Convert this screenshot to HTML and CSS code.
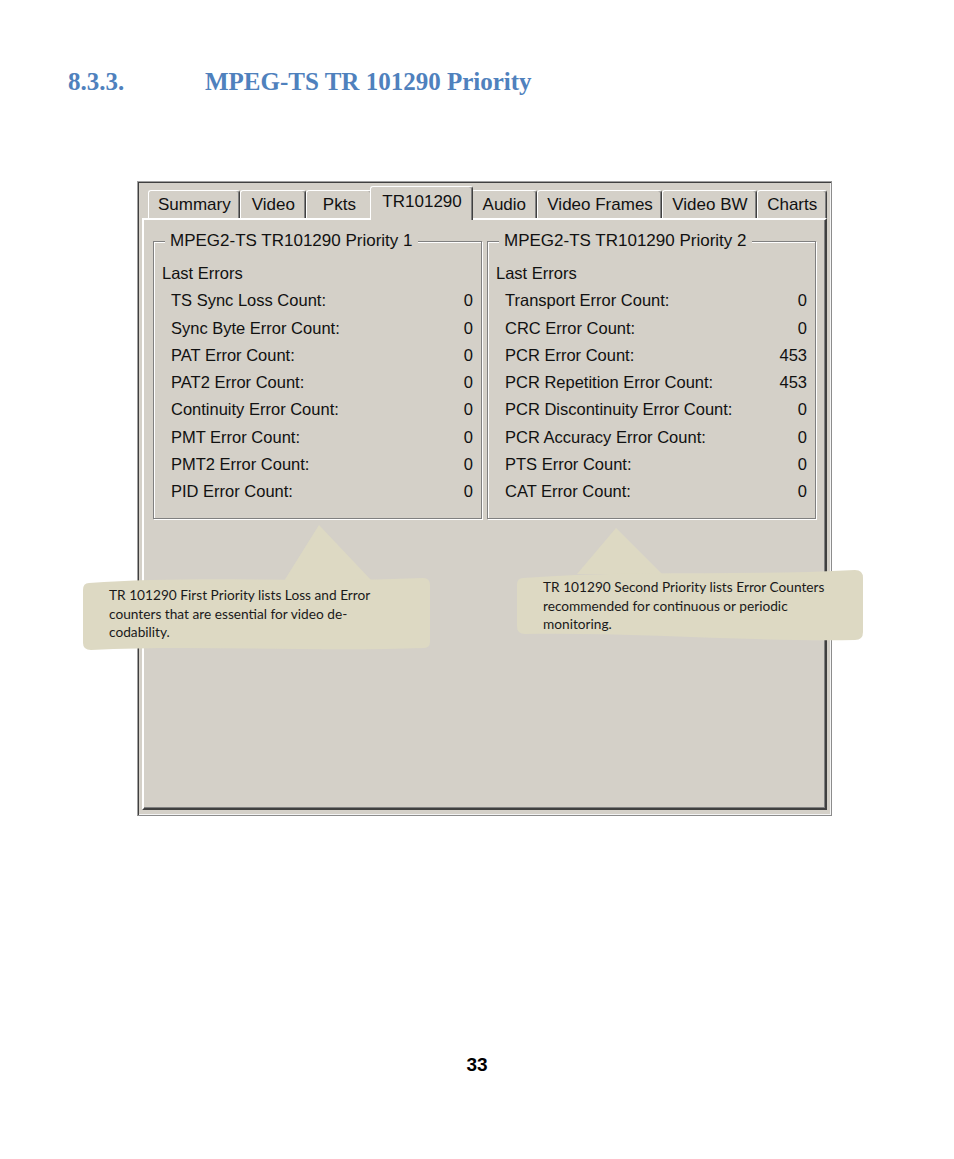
FILE: index.html
```html
<!DOCTYPE html>
<html>
<head>
<meta charset="utf-8">
<link rel="stylesheet" href="styles.css">
</head>
<body>
<div class="doc">
  <h1 class="heading"><span class="num">8.3.3.</span><span class="title">MPEG-TS TR 101290 Priority</span></h1>

  <div class="frame">
    <div class="tabs">
      <div class="tab">Summary</div>
      <div class="tab">Video</div>
      <div class="tab">Pkts</div>
      <div class="tab active">TR101290</div>
      <div class="tab">Audio</div>
      <div class="tab">Video Frames</div>
      <div class="tab">Video BW</div>
      <div class="tab">Charts</div>
    </div>
    <div class="page">
      <div class="groups">
        <fieldset class="group">
          <legend>MPEG2-TS TR101290 Priority 1</legend>
          <div class="list">
            <div class="sub">Last Errors</div>
            <div class="row"><span>TS Sync Loss Count:</span><span>0</span></div>
            <div class="row"><span>Sync Byte Error Count:</span><span>0</span></div>
            <div class="row"><span>PAT Error Count:</span><span>0</span></div>
            <div class="row"><span>PAT2 Error Count:</span><span>0</span></div>
            <div class="row"><span>Continuity Error Count:</span><span>0</span></div>
            <div class="row"><span>PMT Error Count:</span><span>0</span></div>
            <div class="row"><span>PMT2 Error Count:</span><span>0</span></div>
            <div class="row"><span>PID Error Count:</span><span>0</span></div>
          </div>
        </fieldset>
        <fieldset class="group">
          <legend>MPEG2-TS TR101290 Priority 2</legend>
          <div class="list">
            <div class="sub">Last Errors</div>
            <div class="row"><span>Transport Error Count:</span><span>0</span></div>
            <div class="row"><span>CRC Error Count:</span><span>0</span></div>
            <div class="row"><span>PCR Error Count:</span><span>453</span></div>
            <div class="row"><span>PCR Repetition Error Count:</span><span>453</span></div>
            <div class="row"><span>PCR Discontinuity Error Count:</span><span>0</span></div>
            <div class="row"><span>PCR Accuracy Error Count:</span><span>0</span></div>
            <div class="row"><span>PTS Error Count:</span><span>0</span></div>
            <div class="row"><span>CAT Error Count:</span><span>0</span></div>
          </div>
        </fieldset>
      </div>
    </div>
  </div>

  <div class="pagenum">33</div>

  <div class="callout callout-1">
    <svg class="shape" width="347" height="126" viewBox="0 0 347 126">
      <path class="fill" d="M201,56 L236,0 L289,56 Z"/>
      <path class="fill" d="M6,58 C110,50 230,58 340,53 Q347,53 347,60 L347,117 Q347,123 340,123 C240,127 110,120 8,125 Q0,125 0,118 L0,65 Q0,58 6,58 Z"/>
    </svg>
    <p class="note">TR 101290 First Priority lists Loss and Error<br>counters that are essential for video de-<br>codability.</p>
  </div>

  <div class="callout callout-2">
    <svg class="shape" width="347" height="113" viewBox="0 0 347 113">
      <path class="fill" d="M60,46 L99,0 L145,46 Z"/>
      <path class="fill" d="M6,50 C110,42 230,48 338,42 Q346,42 346,50 L346,104 Q346,112 338,112 C240,114 110,104 8,106 Q0,106 0,98 L0,57 Q0,50 6,50 Z"/>
    </svg>
    <p class="note">TR 101290 Second Priority lists Error Counters<br>recommended for continuous or periodic<br>monitoring.</p>
  </div>
</div>
</body>
</html>
```

FILE: styles.css
```css
body {
  margin: 0;
  background: #ffffff;
}

.doc {
  position: relative;
  width: 954px;
  height: 1159px;
  overflow: hidden;
}

.heading {
  margin: 0;
  padding: 67px 0 0 68px;
  display: flex;
  font: bold 25px/30px "Liberation Serif", serif;
  color: #4f81bd;
}

.heading .num {
  width: 137px;
}

/* Window frame */
.frame {
  box-sizing: border-box;
  width: 695px;
  height: 635px;
  margin: 84px 0 0 137px;
  padding: 4px 4px 5px 4px;
  background: #d4d0c8;
  border: 1px solid;
  border-color: #a0a0a0 #8c8c8c #8c8c8c #a0a0a0;
  box-shadow: inset 1px 1px 0 #404040, inset -1px -1px 0 #f4f4f4;
  font-family: "Liberation Sans", Arial, sans-serif;
  color: #111;
}

.tabs {
  display: flex;
  align-items: flex-end;
  height: 32px;
  padding-left: 6px;
}

.tab {
  box-sizing: border-box;
  height: 28px;
  min-width: 66px;
  padding: 0 9px;
  font-size: 17px;
  line-height: 27px;
  text-align: center;
  white-space: nowrap;
  background: #d4d0c8;
  border-top: 1px solid #ffffff;
  border-left: 1px solid #ffffff;
  border-right: 1px solid #404040;
  border-radius: 3px 3px 0 0;
  box-shadow: inset -1px 0 0 #808080;
}

.tab.active {
  height: 34px;
  margin: 0 -2px -2px -2px;
  padding: 0 11px 3px;
  line-height: 30px;
  z-index: 1;
}

.page {
  box-sizing: border-box;
  height: 592px;
  padding: 11px 9px 0 9px;
  border: 2px solid;
  border-color: #ffffff #404040 #404040 #ffffff;
  box-shadow: inset -1px -1px 0 #808080;
}

.groups {
  display: flex;
  gap: 5px;
}

.group {
  box-sizing: border-box;
  width: 329px;
  min-width: 0;
  margin: 0;
  padding: 0 8px 12px 8px;
  border: 1px solid #808080;
  box-shadow: inset 1px 1px 0 #ffffff, 1px 1px 0 #ffffff;
}

.group legend {
  margin-left: 3px;
  padding: 0 5px;
  font-size: 17px;
  line-height: 20px;
  background: #d4d0c8;
}

.list {
  padding-top: 9px;
  font-size: 16.5px;
  line-height: 27.3px;
}

.row {
  display: flex;
  justify-content: space-between;
  padding-left: 9px;
}

/* Callouts */
.callout {
  position: absolute;
}

.callout-1 {
  left: 83px;
  top: 525px;
  width: 347px;
  height: 126px;
}

.callout-2 {
  left: 517px;
  top: 528px;
  width: 347px;
  height: 113px;
}

.shape {
  position: absolute;
  left: 0;
  top: 0;
}

.fill {
  fill: #ddd9c3;
}

.note {
  position: relative;
  margin: 0;
  padding-left: 26px;
  font: 13.7px/18.5px Lato, "Liberation Sans", sans-serif;
  color: #1a1a1a;
}

.callout-1 .note {
  padding-top: 61px;
}

.callout-2 .note {
  padding-top: 50px;
}

.pagenum {
  margin-top: 237px;
  text-align: center;
  font: bold 19px/24px "Liberation Sans", Arial, sans-serif;
  color: #000;
}
```
